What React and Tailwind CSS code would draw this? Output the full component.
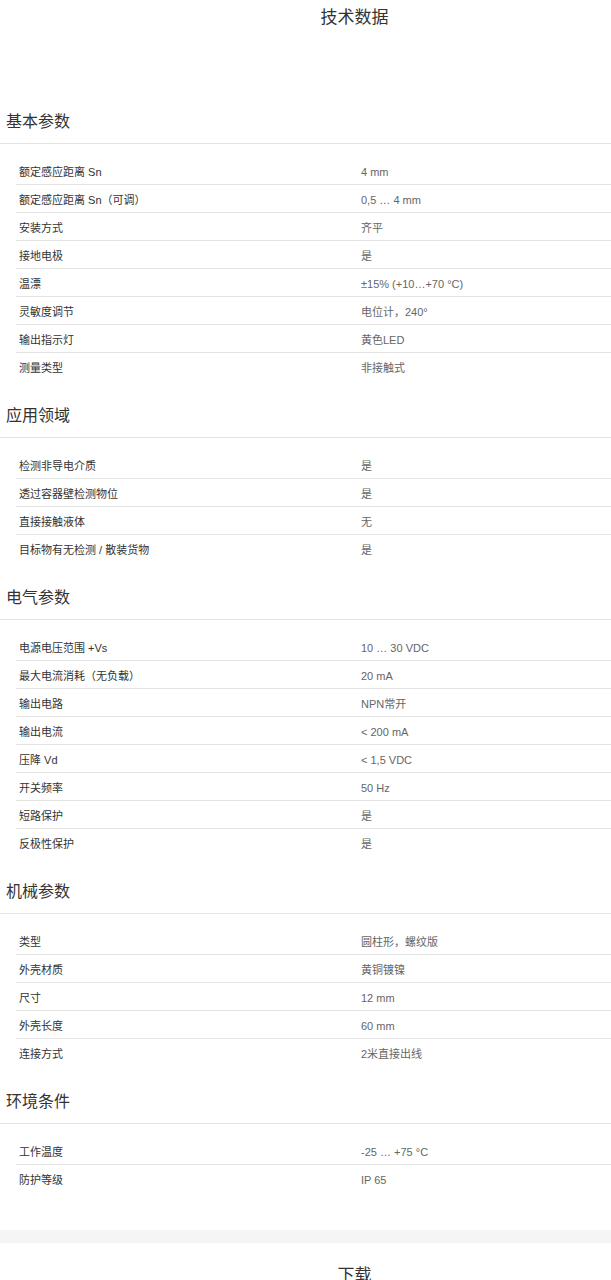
import React from "react";

const sections = [
  {
    title: "基本参数",
    rows: [
      ["额定感应距离 Sn", "4 mm"],
      ["额定感应距离 Sn（可调）", "0,5 … 4 mm"],
      ["安装方式", "齐平"],
      ["接地电极", "是"],
      ["温漂", "±15% (+10…+70 °C)"],
      ["灵敏度调节", "电位计，240°"],
      ["输出指示灯", "黄色LED"],
      ["测量类型", "非接触式"],
    ],
  },
  {
    title: "应用领域",
    rows: [
      ["检测非导电介质", "是"],
      ["透过容器壁检测物位", "是"],
      ["直接接触液体", "无"],
      ["目标物有无检测 / 散装货物", "是"],
    ],
  },
  {
    title: "电气参数",
    rows: [
      ["电源电压范围 +Vs", "10 … 30 VDC"],
      ["最大电流消耗（无负载）", "20 mA"],
      ["输出电路", "NPN常开"],
      ["输出电流", "< 200 mA"],
      ["压降 Vd", "< 1,5 VDC"],
      ["开关频率", "50 Hz"],
      ["短路保护", "是"],
      ["反极性保护", "是"],
    ],
  },
  {
    title: "机械参数",
    rows: [
      ["类型", "圆柱形，螺纹版"],
      ["外壳材质", "黄铜镀镍"],
      ["尺寸", "12 mm"],
      ["外壳长度", "60 mm"],
      ["连接方式", "2米直接出线"],
    ],
  },
  {
    title: "环境条件",
    rows: [
      ["工作温度", "-25 … +75 °C"],
      ["防护等级", "IP 65"],
    ],
  },
];

const Section = ({ title, rows }) => (
  <div className="mt-[22px] first:mt-0">
    {/* heading */}
    <div className="pl-[6px] pt-[2px] pb-[10px] border-b border-[#e3e3e3] text-[16px] leading-[22px] text-[#333]">
      {title}
    </div>
    {/* rows */}
    <div className="mt-[13px] pl-[16px]">
      {rows.map(([label, value], i) => (
        <div
          key={label}
          className={`flex h-[28px] items-center pt-[3px] text-[11px] ${
            i < rows.length - 1 ? "border-b border-[#e3e3e3]" : ""
          }`}
        >
          <div className="w-[345px] pl-[3px] text-[#333]">{label}</div>
          <div className="text-[#666]">{value}</div>
        </div>
      ))}
    </div>
  </div>
);

export default function App() {
  return (
    <div
      className="w-[611px] bg-white"
      style={{ fontFamily: '"Liberation Sans", "Noto Sans CJK SC", sans-serif' }}
    >
      {/* Title */}
      <div className="pt-[6px] pl-[98px] text-center text-[17px] leading-[24px] text-[#333]">
        技术数据
      </div>

      <div className="pt-[79px] pb-[37px]">
        {sections.map((s) => (
          <Section key={s.title} title={s.title} rows={s.rows} />
        ))}
      </div>

      {/* gray band */}
      <div className="h-[13px] bg-[#f5f5f5]" />

      {/* Download */}
      <div className="pt-[21px] pl-[98px] text-center text-[17px] leading-[24px] text-[#333]">
        下载
      </div>
    </div>
  );
}
